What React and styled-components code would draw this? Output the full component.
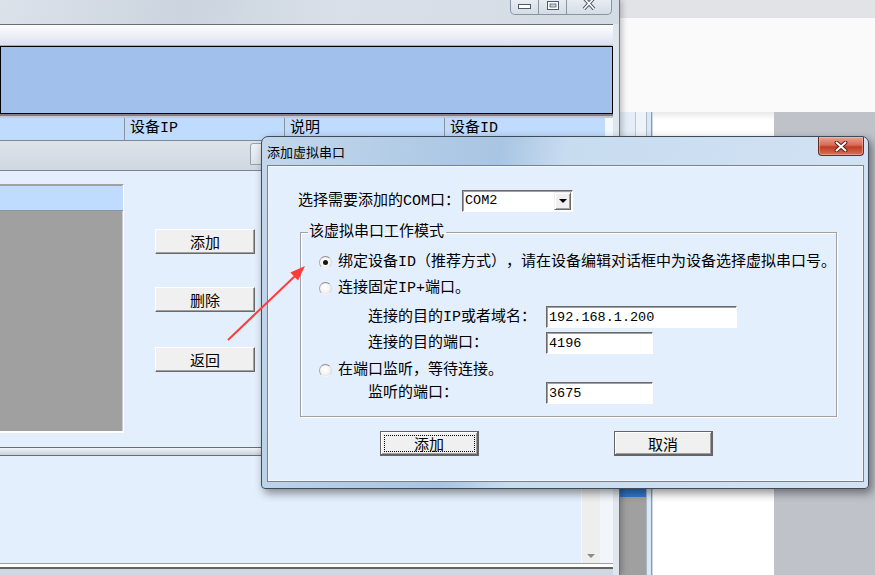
import React from "react";
import styled, { createGlobalStyle, css } from "styled-components";

const GlobalStyle = createGlobalStyle`
  html, body { margin: 0; padding: 0; }
  body {
    background: #fafafa;
    font-family: "Liberation Mono", "Noto Sans CJK SC", monospace;
    font-size: 15px;
    color: #000;
    text-spacing-trim: space-all;
    font-feature-settings: "halt" 0, "chws" 0;
  }
`;

const Desktop = styled.div`
  position: relative;
  display: flex;
  width: 875px;
  height: 575px;
  overflow: hidden;
  background: #fafafa;
`;

/* ---------- window behind the dialog ---------- */

const MainWindow = styled.div`
  position: relative;
  z-index: 1;
  flex: none;
  display: flex;
  flex-direction: column;
  width: 620px;
  box-sizing: border-box;
  background: #dfe6ee;
  border-right: 1px solid #6a7380;
  box-shadow: 2px 0 6px rgba(0, 0, 0, 0.25);
`;

const TitleBar = styled.div`
  flex: none;
  height: 24px;
  display: flex;
  justify-content: flex-end;
  align-items: flex-start;
  padding-right: 7px;
  background: linear-gradient(100deg, #dce2ea 0%, #cbd4df 30%, #d9e0e9 55%, #d3dbe5 100%);
`;

const CaptionGroup = styled.div`
  display: flex;
  height: 14px;
  border: 1px solid #8a95a3;
  border-top: none;
  border-radius: 0 0 5px 5px;
  overflow: hidden;
  background: linear-gradient(#e9edf2, #d5dce5);
`;

const CaptionButton = styled.div`
  width: ${(p) => p.$w}px;
  display: flex;
  align-items: ${(p) => (p.$top ? "flex-start" : "center")};
  justify-content: center;
  & + & {
    border-left: 1px solid #8a95a3;
  }
`;

const WindowBody = styled.div`
  flex: 1;
  display: flex;
  flex-direction: column;
  padding-right: 6px;
`;

const MenuStrip = styled.div`
  flex: none;
  height: 20px;
  border-top: 1px solid #6d6d6d;
  border-bottom: 1px solid #a9aeb9;
  border-radius: 0 0 3px 0;
  background: linear-gradient(#fbfcfe, #eceff7 55%, #dde1ee);
`;

const BlueBand = styled.div`
  flex: none;
  height: 66px;
  border: 1px solid #000;
  background: #a2c0ec;
`;

const Rule = styled.div`
  flex: none;
  height: 4px;
  border-top: 2px solid #7f7f7f;
  background: #c4c9cf;
  box-sizing: border-box;
`;

const HeaderRow = styled.div`
  flex: none;
  display: flex;
  height: 22px;
  margin-right: 8px;
  background: #bfdbfd;
  border-bottom: 1px solid #7e8894;
  box-shadow: 8px 0 0 #f4f7fb;
`;

const HeaderCell = styled.div`
  flex: ${(p) => (p.$w ? "none" : "1")};
  width: ${(p) => (p.$w ? `${p.$w}px` : "auto")};
  box-sizing: border-box;
  padding-left: 5px;
  border-right: ${(p) => (p.$w ? "1px solid #8a949f" : "none")};
  line-height: 22px;
  white-space: nowrap;
`;

const TabStrip = styled.div`
  flex: none;
  height: 29px;
  display: flex;
  align-items: flex-start;
  padding-left: 250px;
  border-bottom: 1px solid #7b8591;
  background: linear-gradient(#dde3ea, #cfd7e1);
`;

const TabStub = styled.div`
  width: 24px;
  height: 20px;
  margin-top: 2px;
  border: 1px solid #97a1ad;
  border-radius: 3px 3px 0 0;
  background: linear-gradient(#eef2f6, #dbe2ea);
`;

const Content = styled.div`
  flex: none;
  height: 276px;
  display: flex;
  align-items: flex-start;
  background: #e3effd;
`;

const ListBox = styled.div`
  width: 124px;
  height: 249px;
  margin-top: 13px;
  box-sizing: border-box;
  display: flex;
  flex-direction: column;
  border-top: 1px solid #a0a0a0;
  border-right: 1px solid #ffffff;
  border-bottom: 2px solid #ffffff;
  box-shadow: inset -1px 0 #c8ccd2;
  background: #a0a0a0;
`;

const ListHeader = styled.div`
  height: 24px;
  margin-top: 1px;
  background: #bfdbfd;
  border-bottom: 1px solid #8d97a3;
`;

const ButtonColumn = styled.div`
  display: flex;
  flex-direction: column;
  gap: 33px;
  margin-left: 31px;
  padding-top: 58px;
`;

const Button = styled.button`
  width: ${(p) => p.$w || 100}px;
  height: 25px;
  padding: 0;
  box-sizing: border-box;
  font-family: "Noto Sans CJK SC", sans-serif;
  font-size: 15px;
  line-height: 1;
  color: #000;
  background: #f0f0f0;
  border: 1px solid;
  border-color: #ffffff #696969 #696969 #ffffff;
  box-shadow: inset -1px -1px #a0a0a0;
  ${(p) =>
    p.$framed &&
    css`
      border-color: #646464;
      border-width: 1px 2px 2px 1px;
      box-shadow: inset 1px 1px #ffffff, inset -1px -1px #a0a0a0;
    `}
  ${(p) =>
    p.$focused &&
    css`
      outline: 1px dotted #000;
      outline-offset: -5px;
    `}
`;

const PaneDivider = styled.div`
  flex: none;
  height: 9px;
  box-sizing: border-box;
  border-top: 1px solid #6d6d6d;
  border-bottom: 1px solid #6d6d6d;
  background: linear-gradient(#f2f5f8, #c6d0db);
`;

const LowerPane = styled.div`
  flex: none;
  height: 107px;
  display: flex;
  background: #e3effd;
  border-right: 13px solid #f2f6fb;
  box-shadow: inset -14px 0 0 -13px #a0a0a0;
`;

const PaneFill = styled.div`
  flex: 1;
`;

const Scrollbar = styled.div`
  width: 18px;
  display: flex;
  flex-direction: column;
  justify-content: flex-end;
  align-items: center;
  padding-bottom: 5px;
  background: #eeeeee;
  border-left: 1px solid #f8f8f8;
`;

const ArrowDown = styled.span`
  width: 0;
  height: 0;
  border-left: 4px solid transparent;
  border-right: 4px solid transparent;
  border-top: 4px solid ${(p) => p.$color || "#8a8a8a"};
`;

const BottomFrame = styled.div`
  flex: 1;
  border-top: 1px solid #a0a0a0;
  box-shadow: inset 0 3px 0 #ffffff, inset 0 5px 0 #646464;
  background: #cfd8e3;
`;

/* ---------- backdrop to the right ---------- */

const Backdrop = styled.div`
  flex: 1;
  display: flex;
  flex-direction: column;
`;

const TopStrip = styled.div`
  height: 18px;
  background: #e2e3e6;
`;

const PaleBand = styled.div`
  height: 94px;
  background: #fafafa;
`;

const LowerRow = styled.div`
  flex: 1;
  display: flex;
`;

const FrameEdge = styled.div`
  width: 33px;
  display: flex;
`;

const EdgeInner = styled.div`
  width: 26px;
  display: flex;
  flex-direction: column;
`;

const EdgeTop = styled.div`
  height: 376px;
  background: linear-gradient(90deg, #e4edf8 0 15px, #b9c8d9 15px 16px, #eef3f9 16px 26px);
`;

const EdgeBlue = styled.div`
  height: 9px;
  background: #2f7ad0;
`;

const EdgeGray = styled.div`
  flex: 1;
  background: #a0a0a0;
`;

const EdgeSide = styled.div`
  flex: 1;
  background: linear-gradient(90deg, #aab9ca 0 1px, #dbe7f4 1px 5px, #8e9aa8 5px 6px, #c9d7e6 6px);
`;

const WhitePane = styled.div`
  width: 121px;
  background: linear-gradient(#e9e9e9, #ffffff 8px);
`;

const GrayPane = styled.div`
  flex: 1;
  background: #bfc2c9;
`;

/* ---------- dialog ---------- */

const Dialog = styled.div`
  position: absolute;
  z-index: 3;
  left: 261px;
  top: 136px;
  width: 608px;
  height: 353px;
  box-sizing: border-box;
  display: flex;
  flex-direction: column;
  padding: 0 4px 6px 5px;
  border: 1px solid #3f4b59;
  border-radius: 7px 7px 4px 4px;
  background: linear-gradient(100deg, #c3d7ec 0%, #a8c5e3 36%, #c8dcf0 46%, #d3e3f3 100%);
  box-shadow: 3px 4px 10px rgba(0, 0, 0, 0.45);
`;

const DialogTitleBar = styled.div`
  flex: none;
  height: 28px;
  display: flex;
  justify-content: space-between;
  align-items: flex-start;
`;

const DialogTitle = styled.div`
  padding-top: 7px;
  font-family: "Noto Sans CJK SC", sans-serif;
  font-size: 13px;
  line-height: 16px;
  color: #000;
`;

const CloseButton = styled.div`
  width: 46px;
  height: 19px;
  box-sizing: border-box;
  display: flex;
  align-items: center;
  justify-content: center;
  border: 1px solid #6b2a20;
  border-top: none;
  border-radius: 0 0 4px 4px;
  background: linear-gradient(#e9a595 0%, #d66b53 45%, #c13c22 55%, #d4735a 100%);
  box-shadow: inset 0 0 0 1px rgba(255, 200, 190, 0.45);
`;

const Client = styled.div`
  flex: 1;
  display: flex;
  flex-direction: column;
  padding-left: 30px;
  background: #e3effd;
  border: 1px solid #76828f;
  box-shadow: inset 0 0 0 1px #f4f8fd;
  line-height: 17px;
`;

const ComboRow = styled.div`
  display: flex;
  align-items: center;
  height: 22px;
  margin-top: 24px;
`;

const Label = styled.span`
  flex: none;
  width: ${(p) => p.$w}px;
  white-space: nowrap;
`;

const sunken = css`
  box-sizing: border-box;
  height: 22px;
  border: 1px solid;
  border-color: #696969 #ffffff #ffffff #696969;
  box-shadow: inset 1px 1px #a0a0a0;
  background: #ffffff;
`;

const Combo = styled.div`
  ${sunken};
  width: 111px;
  display: flex;
  padding: 1px 1px 1px 2px;
`;

const ComboText = styled.span`
  flex: 1;
  font-family: "Liberation Mono", monospace;
  font-size: 13.5px;
  line-height: 18px;
`;

const ComboButton = styled.span`
  width: 17px;
  box-sizing: border-box;
  display: flex;
  align-items: center;
  justify-content: center;
  background: #f0f0f0;
  border: 1px solid;
  border-color: #f0f0f0 #696969 #696969 #f0f0f0;
  box-shadow: inset 1px 1px #ffffff, inset -1px -1px #a0a0a0;
`;

const Group = styled.fieldset`
  width: 537px;
  box-sizing: border-box;
  margin: 12px 0 0 2px;
  padding: 8px 0 12px 0;
  border: 1px solid #a0a0a0;
  box-shadow: inset 1px 1px #ffffff, 1px 1px #ffffff;
  display: flex;
  flex-direction: column;
`;

const Legend = styled.legend`
  margin-left: 7px;
  padding: 0 2px 0 1px;
  line-height: 17px;
`;

const RadioRow = styled.label`
  display: flex;
  align-items: center;
  gap: 6px;
  height: ${(p) => p.$h || 26}px;
  margin-top: ${(p) => p.$mt || 0}px;
  padding-left: 18px;
  white-space: nowrap;
`;

const Radio = styled.span`
  flex: none;
  width: 13px;
  height: 13px;
  box-sizing: border-box;
  display: flex;
  align-items: center;
  justify-content: center;
  border-radius: 50%;
  border: 1px solid;
  border-color: #8d8d8d #dcdcdc #f4f4f4 #a9a9a9;
  background: radial-gradient(circle at 45% 40%, #ffffff 0%, #f3f3f3 55%, #d8d8d8 100%);
  &::after {
    content: "";
    width: 5px;
    height: 5px;
    border-radius: 50%;
    background: ${(p) => (p.$checked ? "#151515" : "transparent")};
  }
`;

const SubRow = styled.div`
  display: flex;
  align-items: center;
  height: ${(p) => p.$h || 26}px;
  margin-top: ${(p) => p.$mt || 0}px;
  padding-left: 67px;
`;

const Field = styled.input`
  ${sunken};
  width: ${(p) => p.$w}px;
  padding: 0 2px;
  margin: 0;
  font-family: "Liberation Mono", monospace;
  font-size: 13.5px;
  color: #000;
  outline: none;
`;

const DialogButtons = styled.div`
  display: flex;
  gap: 135px;
  margin-top: 14px;
  padding-left: 82px;
`;

const Overlay = styled.svg`
  position: absolute;
  z-index: 5;
  left: 0;
  top: 0;
  pointer-events: none;
`;

function CaptionButtons() {
  return (
    <CaptionGroup>
      <CaptionButton $w={27}>
        <svg width="13" height="6" viewBox="0 0 13 6">
          <rect x="0.5" y="0.5" width="12" height="4" fill="#ffffff" stroke="#4e5b6c" />
        </svg>
      </CaptionButton>
      <CaptionButton $w={27} $top>
        <svg width="12" height="10" viewBox="0 0 12 10">
          <rect x="0.5" y="1.5" width="11" height="8" fill="#ffffff" stroke="#4e5b6c" />
          <rect x="3" y="4" width="6" height="3" fill="#cfd6df" stroke="#4e5b6c" strokeWidth="0.8" />
        </svg>
      </CaptionButton>
      <CaptionButton $w={44} $top>
        <svg width="14" height="10" viewBox="0 0 14 10">
          <path d="M2 -2 L12 9 M12 -2 L2 9" stroke="#4e5b6c" strokeWidth="3.6" />
          <path d="M2 -2 L12 9 M12 -2 L2 9" stroke="#ffffff" strokeWidth="1.6" />
        </svg>
      </CaptionButton>
    </CaptionGroup>
  );
}

function BackgroundWindow() {
  return (
    <MainWindow>
      <TitleBar>
        <CaptionButtons />
      </TitleBar>
      <WindowBody>
        <MenuStrip />
        <BlueBand />
        <Rule />
        <HeaderRow>
          <HeaderCell $w={125} />
          <HeaderCell $w={160}>设备IP</HeaderCell>
          <HeaderCell $w={160}>说明</HeaderCell>
          <HeaderCell>设备ID</HeaderCell>
        </HeaderRow>
        <TabStrip>
          <TabStub />
        </TabStrip>
        <Content>
          <ListBox>
            <ListHeader />
          </ListBox>
          <ButtonColumn>
            <Button>添加</Button>
            <Button>删除</Button>
            <Button style={{ marginTop: 2 }}>返回</Button>
          </ButtonColumn>
        </Content>
        <PaneDivider />
        <LowerPane>
          <PaneFill />
          <Scrollbar>
            <ArrowDown />
          </Scrollbar>
        </LowerPane>
        <BottomFrame />
      </WindowBody>
    </MainWindow>
  );
}

function AddPortDialog() {
  return (
    <Dialog>
      <DialogTitleBar>
        <DialogTitle>添加虚拟串口</DialogTitle>
        <CloseButton>
          <svg width="14" height="11" viewBox="0 0 14 11">
            <path d="M2.5 1.5 L11.5 9.5 M11.5 1.5 L2.5 9.5" stroke="#5a1d14" strokeWidth="3.8" strokeLinecap="round" />
            <path d="M2.5 1.5 L11.5 9.5 M11.5 1.5 L2.5 9.5" stroke="#ffffff" strokeWidth="2" strokeLinecap="round" />
          </svg>
        </CloseButton>
      </DialogTitleBar>
      <Client>
        <ComboRow>
          <Label $w={164}>选择需要添加的COM口：</Label>
          <Combo>
            <ComboText>COM2</ComboText>
            <ComboButton>
              <ArrowDown $color="#000" />
            </ComboButton>
          </Combo>
        </ComboRow>
        <Group>
          <Legend>该虚拟串口工作模式</Legend>
          <RadioRow>
            <Radio $checked />
            绑定设备ID（推荐方式），请在设备编辑对话框中为设备选择虚拟串口号。
          </RadioRow>
          <RadioRow>
            <Radio />
            连接固定IP+端口。
          </RadioRow>
          <SubRow $mt={3}>
            <Label $w={178}>连接的目的IP或者域名：</Label>
            <Field $w={191} defaultValue="192.168.1.200" />
          </SubRow>
          <SubRow>
            <Label $w={178}>连接的目的端口：</Label>
            <Field $w={107} defaultValue="4196" />
          </SubRow>
          <RadioRow $h={24} $mt={2}>
            <Radio />
            在端口监听，等待连接。
          </RadioRow>
          <SubRow $h={22}>
            <Label $w={178}>监听的端口：</Label>
            <Field $w={107} defaultValue="3675" />
          </SubRow>
        </Group>
        <DialogButtons>
          <Button $w={99} $framed $focused>添加</Button>
          <Button $w={99} $framed>取消</Button>
        </DialogButtons>
      </Client>
    </Dialog>
  );
}

export default function App() {
  return (
    <>
      <GlobalStyle />
      <Desktop>
        <BackgroundWindow />
        <Backdrop>
          <TopStrip />
          <PaleBand />
          <LowerRow>
            <FrameEdge>
              <EdgeInner>
                <EdgeTop />
                <EdgeBlue />
                <EdgeGray />
              </EdgeInner>
              <EdgeSide />
            </FrameEdge>
            <WhitePane />
            <GrayPane />
          </LowerRow>
        </Backdrop>
        <AddPortDialog />
        <Overlay width="875" height="575" viewBox="0 0 875 575">
          <line x1="228" y1="340" x2="295" y2="276" stroke="#ff3b3b" strokeWidth="2" />
          <polygon points="305,266 298,280.4 290.4,272.4" fill="#ff3b3b" />
        </Overlay>
      </Desktop>
    </>
  );
}
